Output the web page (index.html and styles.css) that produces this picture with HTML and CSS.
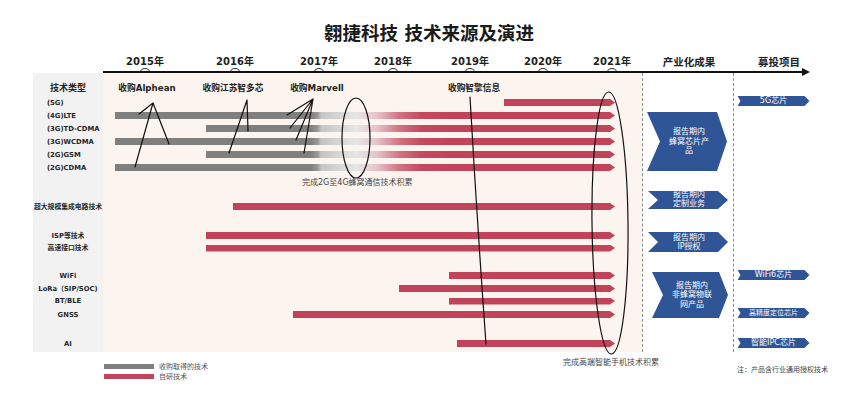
FILE: index.html
```html
<!DOCTYPE html>
<html lang="zh-CN">
<head>
<meta charset="utf-8">
<title>翱捷科技 技术来源及演进</title>
<link rel="stylesheet" href="styles.css">
</head>
<body>
<div class="page">
  <h1 class="title">翱捷科技 技术来源及演进</h1>

  <div class="years">
    <div class="yc"><span>2015年</span><i class="dot"></i></div>
    <div class="yc"><span>2016年</span><i class="dot"></i></div>
    <div class="yc"><span>2017年</span><i class="dot"></i></div>
    <div class="yc"><span>2018年</span><i class="dot"></i></div>
    <div class="yc"><span>2019年</span><i class="dot"></i></div>
    <div class="yc"><span>2020年</span><i class="dot"></i></div>
    <div class="yc"><span>2021年</span><i class="dot"></i></div>
    <div class="yc col"><span>产业化成果</span></div>
    <div class="yc col"><span>募投项目</span></div>
  </div>
  <div class="axis"><div class="axis-line"></div><div class="axis-head"></div></div>

  <div class="chart">
    <div class="labels">
      <div class="r h-head center"><span class="lab-head">技术类型</span></div>
      <div class="r h13 left"><span class="lab">(5G)</span></div>
      <div class="r h13 left"><span class="lab">(4G)LTE</span></div>
      <div class="r h13 left"><span class="lab">(3G)TD-CDMA</span></div>
      <div class="r h13 left"><span class="lab">(3G)WCDMA</span></div>
      <div class="r h13 left"><span class="lab">(2G)GSM</span></div>
      <div class="r h13 left"><span class="lab">(2G)CDMA</span></div>
      <div class="r h26"></div>
      <div class="r h13 center"><span class="lab">超大规模集成电路技术</span></div>
      <div class="r h16"></div>
      <div class="r h13 center"><span class="lab">ISP等技术</span></div>
      <div class="r h12 center"><span class="lab">高速接口技术</span></div>
      <div class="r h15"></div>
      <div class="r h13 center"><span class="lab">WiFi</span></div>
      <div class="r h13 center"><span class="lab">LoRa（SIP/SOC)</span></div>
      <div class="r h12 center"><span class="lab">BT/BLE</span></div>
      <div class="r h15 center"><span class="lab">GNSS</span></div>
      <div class="r h15"></div>
      <div class="r h13 center"><span class="lab">AI</span></div>
    </div>

    <div class="track">
      <div class="r h-head">
        <span class="acq" style="margin-left:4px">收购Alphean</span>
        <span class="acq" style="margin-left:6px">收购江苏智多芯</span>
        <span class="acq" style="margin-left:4px">收购Marvell</span>
        <span class="acq" style="margin-left:77px">收购智擎信息</span>
      </div>
      <div class="r h13"><div class="bar" style="margin-left:401px"></div></div>
      <div class="r h13"><div class="bar evo" style="margin-left:12px"></div></div>
      <div class="r h13"><div class="bar evo" style="margin-left:103px"></div></div>
      <div class="r h13"><div class="bar evo" style="margin-left:12px"></div></div>
      <div class="r h13"><div class="bar evo" style="margin-left:103px"></div></div>
      <div class="r h13"><div class="bar evo" style="margin-left:12px"></div></div>
      <div class="r h26 cap-row"><span class="caption">完成2G至4G蜂窝通信技术积累</span></div>
      <div class="r h13"><div class="bar" style="margin-left:130px"></div></div>
      <div class="r h16"></div>
      <div class="r h13"><div class="bar" style="margin-left:103px"></div></div>
      <div class="r h12"><div class="bar" style="margin-left:103px"></div></div>
      <div class="r h15"></div>
      <div class="r h13"><div class="bar" style="margin-left:346px"></div></div>
      <div class="r h13"><div class="bar" style="margin-left:296px"></div></div>
      <div class="r h12"><div class="bar" style="margin-left:346px"></div></div>
      <div class="r h15"><div class="bar" style="margin-left:190px"></div></div>
      <div class="r h15"></div>
      <div class="r h13"><div class="bar" style="margin-left:354px"></div></div>
    </div>

    <div class="outcome">
      <div class="chev big">报告期内<br>蜂窝芯片产<br>品</div>
      <div class="chev custom">报告期内<br>定制业务</div>
      <div class="chev ip">报告期内<br>IP授权</div>
      <div class="chev iot">报告期内<br>非蜂窝物联<br>网产品</div>
    </div>

    <div class="projects">
      <div class="tag t5g">5G芯片</div>
      <div class="tag twifi">WiFi6芯片</div>
      <div class="tag tgnss">高精度定位芯片</div>
      <div class="tag tipc">智能IPC芯片</div>
    </div>
  </div>

  <div class="footer">
    <div class="f-lab"></div>
    <div class="f-track">
      <div class="legend">
        <div class="li"><i class="sw gray"></i><span>收购取得的技术</span></div>
        <div class="li"><i class="sw red"></i><span>自研技术</span></div>
      </div>
      <div class="caption2">完成高端智能手机技术积累</div>
    </div>
    <div class="f-out"></div>
    <div class="f-proj">注：产品含行业通用授权技术</div>
  </div>

  <svg class="overlay" viewBox="0 0 865 402" xmlns="http://www.w3.org/2000/svg">
    <g fill="none" stroke="#111" stroke-width="1.2" stroke-linecap="round">
      <path d="M153 103 L139 114 M153 103 L169 144 M153 103 L135 167"/>
      <path d="M247 100 L248 131 M247 100 L229 153"/>
      <path d="M313 99 L287 115 M313 99 L290 128 M313 99 L296 140 M313 99 L304 153"/>
      <ellipse cx="356" cy="138" rx="14" ry="40"/>
      <path d="M470 97 Q477 220 486 344"/>
      <ellipse cx="610" cy="223" rx="18" ry="131" transform="rotate(-0.6 610 223)"/>
    </g>
  </svg>
</div>
</body>
</html>
```

FILE: styles.css
```css
* { box-sizing: border-box; margin: 0; padding: 0; }
html, body { background: #fff; }
body {
  width: 865px;
  height: 402px;
  overflow: hidden;
  font-family: "DejaVu Sans", "Noto Sans CJK SC", sans-serif;
  color: #222;
}
.page { position: relative; width: 865px; height: 402px; }

.title {
  padding-top: 23px;
  height: 56px;
  padding-right: 7px;
  text-align: center;
  font-size: 18.5px;
  line-height: 22px;
  font-weight: 700;
  color: #1a1a1a;
}

.years {
  display: grid;
  grid-template-columns: 84px 96px 72px 76px 78px 68px 70px 84px 96px;
  margin-left: 103px;
}
.yc { display: flex; flex-direction: column; align-items: center; }
.yc span { font-size: 10px; line-height: 12px; font-weight: 700; white-space: nowrap; }
.yc.col span { font-size: 10.5px; }
.dot {
  display: block;
  width: 10px;
  height: 8px;
  border: 1.3px solid #333;
  border-radius: 50%;
  margin-bottom: -5px;
}

.axis { display: flex; align-items: center; margin-left: 103px; width: 707px; height: 2px; }
.axis-line { flex: 1; height: 1.6px; background: #111; }
.axis-head {
  width: 0; height: 0;
  border-left: 8px solid #111;
  border-top: 4px solid transparent;
  border-bottom: 4px solid transparent;
}

.chart { display: flex; margin-left: 33px; height: 279px; }
.labels { width: 70px; background: #f2f2f2; display: flex; flex-direction: column; }
.track { width: 539px; background: #fcf4ef; display: flex; flex-direction: column; padding-right: 27px; }
.outcome {
  width: 91px;
  border-left: 1.5px dashed #8c8c8c;
  display: flex;
  flex-direction: column;
  padding-left: 4px;
}
.projects {
  width: 77px;
  border-left: 1.5px dashed #8c8c8c;
  display: flex;
  flex-direction: column;
  padding-left: 3.5px;
}

.r { display: flex; align-items: center; flex: none; }
.h-head { height: 23px; align-items: flex-end; padding-bottom: 3px; }
.h12 { height: 12px; }
.h13 { height: 13px; }
.h15 { height: 15px; }
.h16 { height: 16px; }
.h26 { height: 26px; }
.left { padding-left: 14px; }
.center { justify-content: center; }

.lab-head { font-size: 9px; line-height: 10px; font-weight: 700; }
.lab { font-size: 6.8px; line-height: 8px; font-weight: 700; white-space: nowrap; color: #262626; }

.acq {
  width: 80px;
  flex: none;
  text-align: center;
  font-size: 8.7px;
  line-height: 10px;
  font-weight: 700;
  white-space: nowrap;
}

.bar {
  flex: 1;
  height: 7px;
  background: #c1445a;
  clip-path: polygon(0 0, calc(100% - 5px) 0, 100% 50%, calc(100% - 5px) 100%, 0 100%);
}
.bar.evo {
  background: linear-gradient(to right,
    #7f7f7f 0, #7f7f7f 196px, #9a9a9a 203px, #c4c4c4 206px,
    #e6e6e6 241px, #e6c3c9 262px, #d27483 284px, #c4495f 306px, #c1445a 330px)
    right center / 500px 100% no-repeat;
}

.cap-row { align-items: flex-start; padding-top: 4px; }
.caption {
  margin-left: 199px;
  font-size: 8px;
  line-height: 10px;
  color: #444;
  white-space: nowrap;
}

.chev {
  flex: none;
  background: #2f5597;
  color: #fff;
  font-size: 8px;
  line-height: 9.4px;
  text-align: center;
  display: flex;
  align-items: center;
  justify-content: center;
}
.big {
  width: 80px; height: 59px; margin-top: 39px;
  padding-left: 4px;
  clip-path: polygon(0 0, 70px 0, 100% 50%, 70px 100%, 0 100%, 13px 50%);
}
.custom {
  width: 80px; height: 18px; margin-top: 20px; margin-left: 1px;
  padding-left: 2px;
  line-height: 8.6px;
  clip-path: polygon(0 0, 70px 0, 100% 50%, 70px 100%, 0 100%, 10px 50%);
}
.ip {
  width: 80px; height: 20px; margin-top: 23px; margin-left: 1px;
  padding-left: 2px;
  clip-path: polygon(0 0, 70px 0, 100% 50%, 70px 100%, 0 100%, 10px 50%);
}
.iot {
  width: 76px; height: 46px; margin-top: 20px; margin-left: 5px;
  padding-left: 4px;
  clip-path: polygon(0 0, 67px 0, 100% 50%, 67px 100%, 0 100%, 11px 50%);
}

.tag {
  flex: none;
  width: 72px;
  height: 10px;
  background: #2f5597;
  color: #fff;
  font-size: 8px;
  line-height: 10px;
  text-align: center;
  white-space: nowrap;
  clip-path: polygon(0 0, calc(100% - 5px) 0, 100% 50%, calc(100% - 5px) 100%, 0 100%, 3px 50%);
}
.t5g { margin-top: 23px; }
.twifi { margin-top: 164px; }
.tgnss { margin-top: 28px; font-size: 7px; }
.tipc { margin-top: 20px; }

.footer { display: flex; margin-left: 33px; height: 50px; }
.f-lab { width: 70px; flex: none; }
.f-track { width: 539px; flex: none; display: flex; }
.legend { flex: none; width: 459px; margin-left: 1px; padding-top: 9px; }
.li { display: flex; align-items: center; gap: 5px; height: 10px; font-size: 7px; color: #555; white-space: nowrap; }
.sw { display: block; width: 50px; height: 5px; }
.sw.gray { background: #7f7f7f; }
.sw.red { background: #c1445a; }
.caption2 { flex: none; padding-top: 6px; font-size: 8px; line-height: 10px; color: #444; white-space: nowrap; }
.f-out { width: 91px; flex: none; }
.f-proj { flex: none; padding-left: 4px; padding-top: 13px; font-size: 7px; line-height: 10px; color: #444; white-space: nowrap; }

.overlay {
  position: absolute;
  left: 0;
  top: 0;
  width: 865px;
  height: 402px;
  pointer-events: none;
}
```
